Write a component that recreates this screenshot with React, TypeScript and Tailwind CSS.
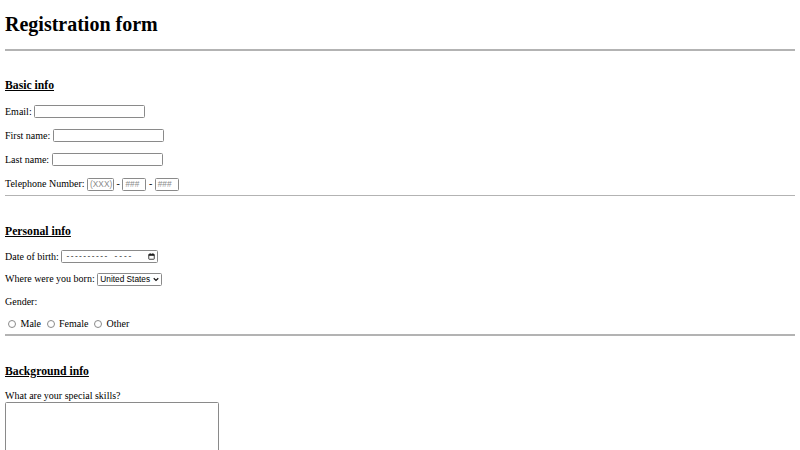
import React from "react";

const serif = { fontFamily: '"Liberation Serif", "Times New Roman", serif' };

function TextBox({ w, placeholder }: { w: string; placeholder?: string }) {
  return (
    <div
      className={`${w} h-[13px] border border-[#8a8a8a] rounded-[1.5px] bg-white flex items-center pl-[2px] text-[8.3px] text-[#8a8a8a] font-['Liberation_Sans',Arial,sans-serif] leading-none`}
    >
      {placeholder}
    </div>
  );
}

function Radio({ label, last }: { label: string; last?: boolean }) {
  return (
    <>
      <span className="ml-[3.1px] mr-[4.4px] w-[8px] h-[8px] rounded-full border border-[#8a8a8a] bg-white inline-block" />
      <span className={last ? "" : "mr-[2.5px]"}>{label}</span>
    </>
  );
}

export default function App() {
  return (
    <div className="w-[800px] h-[450px] overflow-hidden bg-white">
      <div
        className="w-[800px] text-black px-[5px] flex flex-col text-[10px] leading-[11.5px] [&>*]:shrink-0"
        style={serif}
      >
        <h1 className="mt-[13.4px] text-[20px] leading-[23px] font-bold">Registration form</h1>
        <div className="mt-[12.9px] h-[1.5px] bg-[#b3b3b3]" />

        <h3 className="mt-[27.8px] text-[11.7px] leading-[13.5px] font-bold underline">Basic info</h3>
        <div className="mt-[12.4px] h-[14px] flex items-center gap-[2.6px]">
          <span>Email:</span>
          <TextBox w="w-[111px]" />
        </div>
        <div className="mt-[10.2px] h-[14px] flex items-center gap-[2.6px]">
          <span>First name:</span>
          <TextBox w="w-[111px]" />
        </div>
        <div className="mt-[10.2px] h-[14px] flex items-center gap-[2.6px]">
          <span>Last name:</span>
          <TextBox w="w-[111px]" />
        </div>
        <div className="mt-[10.2px] h-[14px] flex items-center gap-[2.5px]">
          <span>Telephone Number:</span>
          <TextBox w="w-[27px]" placeholder="(XXX)" />
          <span>-</span>
          <TextBox w="w-[24px]" placeholder="###" />
          <span>-</span>
          <TextBox w="w-[24px]" placeholder="###" />
        </div>
        <div className="mt-[3.9px] h-[1.5px] bg-[#b3b3b3]" />

        <h3 className="mt-[28.5px] text-[11.7px] leading-[13.5px] font-bold underline">Personal info</h3>
        <div className="mt-[11.2px] h-[14px] flex items-center gap-[2.6px]">
          <span>Date of birth:</span>
          <div className="w-[97px] h-[13.5px] border border-[#8a8a8a] rounded-[1.5px] flex items-center pl-[4px] pr-[2.5px] font-['Liberation_Sans',Arial,sans-serif] text-[8.3px] leading-none text-[#333]">
            <span className="tracking-[1.45px]">----------</span>
            <span className="ml-[6px] tracking-[1.9px]">----</span>
            <svg className="ml-auto" width="7" height="7" viewBox="0 0 14 14" fill="none">
              <rect x="1.5" y="2.5" width="11" height="10" rx="1" stroke="#111" strokeWidth="1.6" />
              <rect x="1.5" y="2.5" width="11" height="3" fill="#111" />
              <rect x="3.5" y="0.5" width="1.6" height="3" fill="#111" />
              <rect x="8.9" y="0.5" width="1.6" height="3" fill="#111" />
            </svg>
          </div>
        </div>
        <div className="mt-[8.6px] h-[14px] flex items-center gap-[2.6px]">
          <span>Where were you born:</span>
          <div className="w-[64.5px] h-[12.7px] border border-[#8a8a8a] rounded-[1.5px] flex items-center pl-[2px] pr-[2px] font-['Liberation_Sans',Arial,sans-serif] text-[8.3px] leading-none text-black">
            <span>United States</span>
            <svg className="ml-auto" width="6" height="5" viewBox="0 0 12 10" fill="none">
              <path d="M1.5 2.5 L6 7 L10.5 2.5" stroke="#111" strokeWidth="2.4" />
            </svg>
          </div>
        </div>
        <div className="mt-[8.2px] h-[14px] flex items-center">
          <span>Gender:</span>
        </div>
        <div className="mt-[8.6px] h-[14px] flex items-center">
          <Radio label="Male" />
          <Radio label="Female" />
          <Radio label="Other" last />
        </div>
        <div className="mt-[3.4px] h-[1.5px] bg-[#b3b3b3]" />

        <h3 className="mt-[29px] text-[11.7px] leading-[13.5px] font-bold underline">Background info</h3>
        <div className="mt-[11.4px]">What are your special skills?</div>
        <div className="mt-[0.3px] w-[214.3px] h-[100px] border border-[#8a8a8a] rounded-[1.5px]" />
      </div>
    </div>
  );
}
